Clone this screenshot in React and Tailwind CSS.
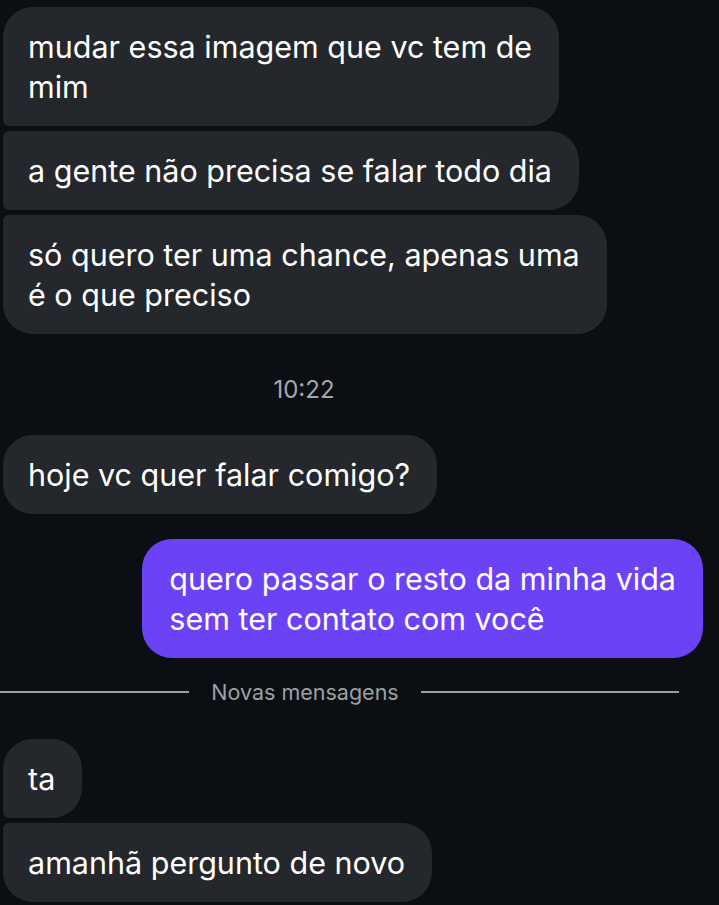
import React from 'react';

const font = { fontFamily: 'Inter, "Noto Sans", sans-serif' };

// corner shapes for grouped incoming bubbles
const shapes = {
  single: 'rounded-[30px]',
  first: 'rounded-[30px] rounded-bl-[6px]',
  middle: 'rounded-[30px] rounded-tl-[6px] rounded-bl-[6px]',
  last: 'rounded-[30px] rounded-tl-[6px]',
};

const Incoming = ({ lines, shape = 'single' }) => (
  <div className={`self-start w-fit bg-[#24272b] text-white pl-[25px] pr-[27px] py-[19.5px] ${shapes[shape]}`}>
    {lines.map((l, i) => (
      <div key={i} className="whitespace-nowrap text-[30.5px] leading-[40px]">
        {l}
      </div>
    ))}
  </div>
);

export default function App() {
  return (
    <div className="w-[719px] h-[905px] overflow-hidden bg-[#0b0f13] text-white" style={font}>
      <div className="flex flex-col pt-[7px] pl-[3px] pr-[16px]">
        <div className="flex flex-col gap-[5px]">
          <Incoming shape="first" lines={['mudar essa imagem que vc tem de', 'mim']} />
          <Incoming shape="middle" lines={['a gente não precisa se falar todo dia']} />
          <Incoming shape="last" lines={['só quero ter uma chance, apenas uma', 'é o que preciso']} />
        </div>

        <div className="mt-[44px] mb-[33px] text-center pr-[98px] text-[24px] leading-[24px] text-[#a3a7ab]">
          10:22
        </div>

        <Incoming lines={['hoje vc quer falar comigo?']} />

        <div className="mt-[25px] self-end w-fit bg-[#6c42f6] text-white rounded-[30px] pl-[27px] pr-[27px] py-[19.5px]">
          <div className="whitespace-nowrap text-[30.5px] leading-[40px]">quero passar o resto da minha vida</div>
          <div className="whitespace-nowrap text-[30.5px] leading-[40px]">sem ter contato com você</div>
        </div>

        <div className="-ml-[3px] mt-[22px] flex items-center w-[679px]">
          <div className="h-[1.5px] w-[189px] bg-[#9a9ea3]" />
          <div className="flex-1 text-center text-[21.5px] leading-[24px] text-[#9ba0a5]">Novas mensagens</div>
          <div className="h-[1.5px] w-[258px] bg-[#9a9ea3]" />
        </div>

        <div className="mt-[35px] flex flex-col gap-[5px]">
          <Incoming shape="first" lines={['ta']} />
          <Incoming shape="last" lines={['amanhã pergunto de novo']} />
        </div>
      </div>
    </div>
  );
}
